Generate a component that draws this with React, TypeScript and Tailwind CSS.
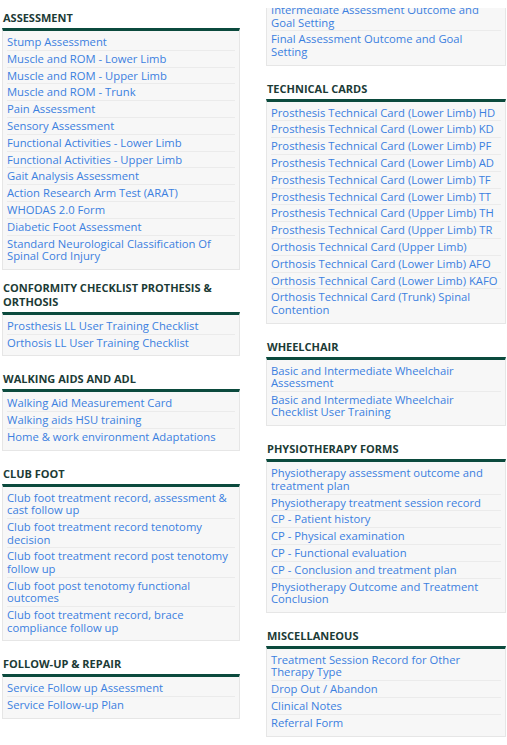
type Section = {
  title?: string;
  links: string[];
};

const leftSections: Section[] = [
  {
    title: "Assessment",
    links: [
      "Stump Assessment",
      "Muscle and ROM - Lower Limb",
      "Muscle and ROM - Upper Limb",
      "Muscle and ROM - Trunk",
      "Pain Assessment",
      "Sensory Assessment",
      "Functional Activities - Lower Limb",
      "Functional Activities - Upper Limb",
      "Gait Analysis Assessment",
      "Action Research Arm Test (ARAT)",
      "WHODAS 2.0 Form",
      "Diabetic Foot Assessment",
      "Standard Neurological Classification Of Spinal Cord Injury",
    ],
  },
  {
    title: "Conformity Checklist Prothesis & Orthosis",
    links: ["Prosthesis LL User Training Checklist", "Orthosis LL User Training Checklist"],
  },
  {
    title: "Walking Aids and ADL",
    links: ["Walking Aid Measurement Card", "Walking aids HSU training", "Home & work environment Adaptations"],
  },
  {
    title: "Club Foot",
    links: [
      "Club foot treatment record, assessment &\ncast follow up",
      "Club foot treatment record tenotomy\ndecision",
      "Club foot treatment record post tenotomy\nfollow up",
      "Club foot post tenotomy functional\noutcomes",
      "Club foot treatment record, brace\ncompliance follow up",
    ],
  },
  {
    title: "Follow-up & Repair",
    links: ["Service Follow up Assessment", "Service Follow-up Plan"],
  },
];

// line breaks written out where the original wraps, so the narrow columns break the same way
const rightSections: Section[] = [
  {
    title: "Technical Cards",
    links: [
      "Prosthesis Technical Card (Lower Limb) HD",
      "Prosthesis Technical Card (Lower Limb) KD",
      "Prosthesis Technical Card (Lower Limb) PF",
      "Prosthesis Technical Card (Lower Limb) AD",
      "Prosthesis Technical Card (Lower Limb) TF",
      "Prosthesis Technical Card (Lower Limb) TT",
      "Prosthesis Technical Card (Upper Limb) TH",
      "Prosthesis Technical Card (Upper Limb) TR",
      "Orthosis Technical Card (Upper Limb)",
      "Orthosis Technical Card (Lower Limb) AFO",
      "Orthosis Technical Card (Lower Limb) KAFO",
      "Orthosis Technical Card (Trunk) Spinal\nContention",
    ],
  },
  {
    title: "Wheelchair",
    links: [
      "Basic and Intermediate Wheelchair\nAssessment",
      "Basic and Intermediate Wheelchair\nChecklist User Training",
    ],
  },
  {
    title: "Physiotherapy Forms",
    links: [
      "Physiotherapy assessment outcome and\ntreatment plan",
      "Physiotherapy treatment session record",
      "CP - Patient history",
      "CP - Physical examination",
      "CP - Functional evaluation",
      "CP - Conclusion and treatment plan",
      "Physiotherapy Outcome and Treatment\nConclusion",
    ],
  },
  {
    title: "Miscellaneous",
    links: [
      "Treatment Session Record for Other\nTherapy Type",
      "Drop Out / Abandon",
      "Clinical Notes",
      "Referral Form",
    ],
  },
];

// continuation of a box that started above the fold
const carriedOver = [
  "Intermediate Assessment Outcome and\nGoal Setting",
  "Final Assessment Outcome and Goal\nSetting",
];

function LinkList({ links, bar = true }: { links: string[]; bar?: boolean }) {
  return (
    <ul
      className={`bg-[#f7f7f7] border border-[#e6e6e6] px-[4px] pt-[3px] pb-[5px] ${
        bar ? "border-t-[3px] border-t-[#0b4a3d]" : ""
      }`}
    >
      {links.map((link) => (
        <li
          key={link}
          className="pt-[2px] pb-[1.3px] border-b border-[#ebebeb] last:border-b-0 text-[11.25px] leading-[12.5px] text-[#3b80e0] whitespace-pre-line"
        >
          <a href="#">{link}</a>
        </li>
      ))}
    </ul>
  );
}

function SectionBlock({ section }: { section: Section }) {
  return (
    <div className="mb-[11px]">
      <h3 className="min-h-[22px] flex items-end pb-[3px] px-[1px] text-[11px] leading-[14px] font-bold uppercase text-[#1c3b36]">
        {section.title}
      </h3>
      <LinkList links={section.links} />
    </div>
  );
}

export default function App() {
  return (
    <div
      className="h-[745px] overflow-hidden bg-white pl-[2px] grid grid-cols-[238px_240px] gap-x-[26px] items-start"
      style={{ fontFamily: '"Open Sans", "Liberation Sans", sans-serif' }}
    >
      {/* Left column */}
      <div className="pt-[6px]">
        {leftSections.map((s) => (
          <SectionBlock key={s.title} section={s} />
        ))}
      </div>

      {/* Right column */}
      <div className="pt-[8px]">
        <div className="overflow-hidden mb-[11px]">
          <div className="-mt-[10px]">
            <LinkList links={carriedOver} bar={false} />
          </div>
        </div>
        {rightSections.map((s) => (
          <SectionBlock key={s.title} section={s} />
        ))}
      </div>
    </div>
  );
}
